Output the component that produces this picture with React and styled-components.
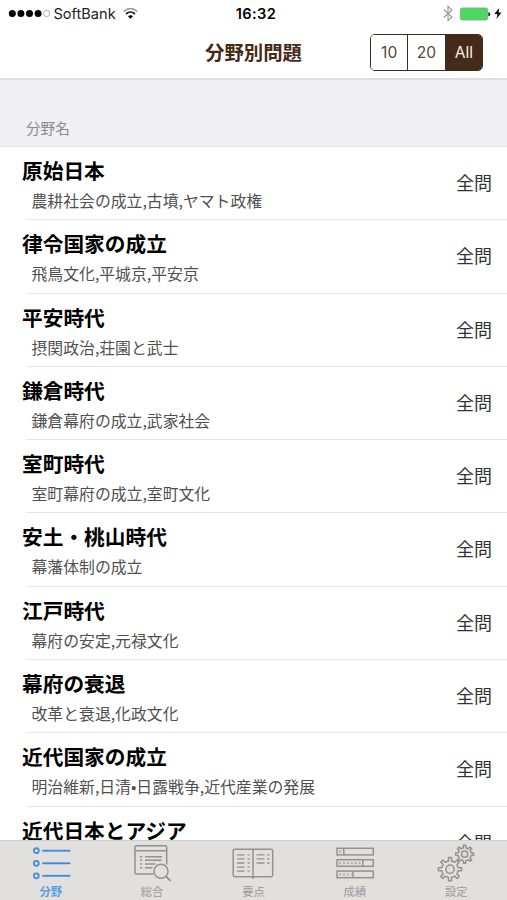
import React from "react";
import styled, { createGlobalStyle } from "styled-components";

const brown = "#452a17";

const GlobalStyle = createGlobalStyle`
  * { box-sizing: border-box; }
  body { margin: 0; background: #fff; overflow: hidden; }
`;

const Screen = styled.div`
  width: 507px;
  height: 900px;
  display: flex;
  flex-direction: column;
  overflow: hidden;
  background: #fff;
  color: #000;
  font-family: Inter, "Noto Sans CJK JP", sans-serif;
`;

const StatusBar = styled.div`
  flex: none;
  height: 27px;
  display: grid;
  grid-template-columns: 1fr auto 1fr;
  align-items: center;
  padding: 0 5px 0 8px;
`;

const Carrier = styled.div`
  display: flex;
  align-items: center;
  font-size: 14.6px;
  color: #222;
`;

const CarrierName = styled.span`
  margin: 0 7px 0 2.5px;
`;

const Clock = styled.div`
  padding-left: 2px;
  font-size: 14.6px;
  font-weight: 600;
  letter-spacing: 0.35px;
`;

const Indicators = styled.div`
  display: flex;
  align-items: center;
  justify-content: flex-end;
`;

const NavBar = styled.header`
  flex: none;
  height: 53px;
  display: grid;
  grid-template-columns: 1fr auto 1fr;
  align-items: center;
  padding: 0 24px 1px;
  border-bottom: 2px solid #dedee1;
`;

const NavTitle = styled.h1`
  grid-column: 2;
  margin: 0;
  font: 700 19.4px/28px "Noto Sans CJK JP", sans-serif;
  color: ${brown};
`;

const Segments = styled.div`
  justify-self: end;
  display: flex;
  width: 113px;
  height: 37px;
  border: 1px solid ${brown};
  border-radius: 5px;
  overflow: hidden;
`;

const Segment = styled.button`
  flex: 1;
  padding: 0;
  border: 0;
  border-left: ${(p) => (p.$first ? "0" : `1px solid ${brown}`)};
  background: ${(p) => (p.$active ? brown : "#fff")};
  color: ${(p) => (p.$active ? "#f3efec" : "#5a4334")};
  font: 400 15.6px Inter, sans-serif;
`;

const SectionHeader = styled.div`
  flex: none;
  height: 67px;
  display: flex;
  align-items: flex-end;
  padding: 0 26px 7px;
  background: #efeff4;
  border-bottom: 1px solid #e6e6ea;
  font: 400 14.6px/22px "Noto Sans CJK JP", sans-serif;
  color: #8b8b90;
`;

const List = styled.main`
  flex: 1;
  min-height: 0;
  overflow: hidden;
`;

const Row = styled.div`
  height: 73.3px;
  display: flex;
  align-items: flex-start;
  justify-content: space-between;
  padding: 8px 15px 0 22px;
  background: linear-gradient(#e6e6e8, #e6e6e8) 26px 100% / 100% 1px no-repeat;
  font-family: "Noto Sans CJK JP", sans-serif;
`;

const RowTitle = styled.div`
  font-size: 20.7px;
  font-weight: 700;
  line-height: 30px;
`;

const RowDetail = styled.div`
  padding: 1px 0 0 9.5px;
  font-size: 15.85px;
  line-height: 30px;
  color: #505050;
`;

const RowCount = styled.div`
  padding-top: 13px;
  font-size: 18px;
  line-height: 28px;
  color: #333;
`;

const TabBar = styled.nav`
  flex: none;
  height: 60px;
  display: grid;
  grid-template-columns: repeat(5, 1fr);
  background: #e1e0dc;
  border-top: 1px solid #cfcfcc;
`;

const Tab = styled.div`
  display: flex;
  flex-direction: column;
  align-items: center;
  color: ${(p) => (p.$active ? "#3c8ae2" : "#929292")};
`;

const TabLabel = styled.span`
  font: ${(p) => (p.$active ? 700 : 400)} 11.3px/16px "Noto Sans CJK JP", sans-serif;
  color: ${(p) => (p.$active ? "#5a9de6" : "#9b9b9b")};
`;

const Icon = styled.svg`
  display: block;
  flex: none;
  fill: none;
  stroke: currentColor;
  stroke-width: 1.5;
`;

const SignalDots = () => (
  <Icon width="43" height="10" viewBox="0 0 43 10">
    {[4.3, 12.9, 21.5, 30.1].map((x) => (
      <circle key={x} cx={x} cy="4.5" r="3.5" fill="#000" stroke="none" />
    ))}
    <circle cx="38.6" cy="4.5" r="3.1" stroke="#999" strokeWidth="0.8" />
  </Icon>
);

const WifiIcon = () => (
  <Icon width="16" height="12" viewBox="0 0 16 12">
    <path d="M.8 3.6C5-.4 10-.4 14.2 3.6" stroke="#999" />
    <path d="M3 6C5.6 3.6 9.4 3.6 12 6" stroke="#222" strokeWidth="1.8" />
    <path d="M5 8.2Q7.5 6.2 10 8.2L7.5 10.8Z" fill="#000" stroke="none" />
  </Icon>
);

const BluetoothIcon = () => (
  <Icon width="10" height="17" viewBox="0 0 10 17">
    <path d="M.8 4.5L9 12 5 15.7V1.3L9 5 .8 12.5" stroke="#999" strokeWidth="1.1" />
  </Icon>
);

const BatteryIcon = () => (
  <Icon width="41" height="14" viewBox="0 0 41 14">
    <rect x="7.3" y="1" width="27.4" height="12" rx="2" fill="#4bd963" stroke="#84a98a" strokeWidth="0.9" />
    <path d="M35.3 5.2q2 0 2 2t-2 2z" fill="#222" stroke="none" />
  </Icon>
);

const BoltIcon = () => (
  <Icon width="8" height="11" viewBox="0 0 8 11">
    <path d="M5.3 0L.3 6H3.5L2.4 11 7.5 4.6H4.5Z" fill="#000" stroke="none" />
  </Icon>
);

const ListIcon = () => (
  <Icon width="40" height="42" viewBox="0 0 40 42">
    {[9.7, 22.3, 34.8].map((y) => (
      <g key={y}>
        <circle cx="5.3" cy={y} r="2.5" strokeWidth="1.7" />
        <path d={`M11.3 ${y}H39.3`} strokeWidth="1.9" />
      </g>
    ))}
  </Icon>
);

const SearchPageIcon = () => (
  <Icon width="40" height="42" viewBox="0 0 40 42">
    <path d="M21.5 33H4.5Q3 33 3 31.5V6Q3 4.8 4.5 4.8H33.2Q34.7 4.8 34.7 6V23.4M3 9.8H34.7" />
    {[15.7, 19.3, 23, 26.7].map((y, i) => (
      <path key={y} d={`M8 ${y}H10.3M13 ${y}H${[30, 29.5, 23.5, 20.5][i]}`} strokeWidth="1.4" />
    ))}
    <circle cx="29" cy="30.3" r="7" />
    <path d="M34 35.3L38.5 39.8" strokeWidth="1.9" />
  </Icon>
);

const BookIcon = () => (
  <Icon width="42" height="42" viewBox="0 0 42 42">
    <path d="M21 8.2H3Q1.2 8.2 1.2 10V34Q1.2 35.7 3 35.7H19.5L21 37 22.5 35.7H39Q40.7 35.7 40.7 34V10Q40.7 8.2 39 8.2ZM21 8.2V37" />
    {[13.8, 17.9, 22, 26.1, 30.2].map((y) => (
      <path key={y} d={`M5 ${y}H12.5M15.5 ${y}H17.7`} strokeWidth="1.3" />
    ))}
    {[13.8, 17.9, 22].map((y) => (
      <path key={y} d={`M24.5 ${y}H32.5M35 ${y}H37.5`} strokeWidth="1.3" />
    ))}
  </Icon>
);

const BarsIcon = () => (
  <Icon width="40" height="42" viewBox="0 0 40 42">
    {[[7.3, 6.8], [18.7, 25.8], [30.1, 16]].map(([y, fill]) => (
      <g key={y}>
        <rect x="2" y={y} width="36.3" height="6.6" />
        <path d={`M${2 + fill} ${y}V${y + 6.6}`} />
        <path
          d={`M4 ${y + 3.3}H${fill + 0.5}`}
          strokeWidth="2.4"
          strokeDasharray="2.1 1.8"
          strokeOpacity="0.55"
        />
      </g>
    ))}
  </Icon>
);

function gearPath(cx, cy, outer, inner, teeth) {
  const step = (Math.PI * 2) / teeth;
  const points = [];
  for (let i = 0; i < teeth; i += 1) {
    const a = i * step - Math.PI / 2;
    [[-0.24, inner], [-0.16, outer], [0.16, outer], [0.24, inner]].forEach(([offset, r]) => {
      const t = a + offset * step;
      points.push(`${(cx + r * Math.cos(t)).toFixed(2)} ${(cy + r * Math.sin(t)).toFixed(2)}`);
    });
  }
  return `M${points.join("L")}Z`;
}

const GearsIcon = () => (
  <Icon width="40" height="42" viewBox="0 0 40 42" strokeLinejoin="round">
    <path d={gearPath(14, 28.2, 11.7, 8.4, 8)} />
    <circle cx="14" cy="28.2" r="4.1" />
    <path d={gearPath(28.6, 13.2, 9, 6.6, 8)} />
    <circle cx="28.6" cy="13.2" r="3.1" />
  </Icon>
);

const topics = [
  ["原始日本", "農耕社会の成立,古墳,ヤマト政権"],
  ["律令国家の成立", "飛鳥文化,平城京,平安京"],
  ["平安時代", "摂関政治,荘園と武士"],
  ["鎌倉時代", "鎌倉幕府の成立,武家社会"],
  ["室町時代", "室町幕府の成立,室町文化"],
  ["安土・桃山時代", "幕藩体制の成立"],
  ["江戸時代", "幕府の安定,元禄文化"],
  ["幕府の衰退", "改革と衰退,化政文化"],
  ["近代国家の成立", "明治維新,日清•日露戦争,近代産業の発展"],
  ["近代日本とアジア", ""],
];

const tabs = [
  ["分野", ListIcon],
  ["総合", SearchPageIcon],
  ["要点", BookIcon],
  ["成績", BarsIcon],
  ["設定", GearsIcon],
];

export default function App() {
  return (
    <Screen>
      <GlobalStyle />
      <StatusBar>
        <Carrier>
          <SignalDots />
          <CarrierName>SoftBank</CarrierName>
          <WifiIcon />
        </Carrier>
        <Clock>16:32</Clock>
        <Indicators>
          <BluetoothIcon />
          <BatteryIcon />
          <BoltIcon />
        </Indicators>
      </StatusBar>
      <NavBar>
        <NavTitle>分野別問題</NavTitle>
        <Segments>
          <Segment $first>10</Segment>
          <Segment>20</Segment>
          <Segment $active>All</Segment>
        </Segments>
      </NavBar>
      <SectionHeader>分野名</SectionHeader>
      <List>
        {topics.map(([title, detail]) => (
          <Row key={title}>
            <div>
              <RowTitle>{title}</RowTitle>
              {detail && <RowDetail>{detail}</RowDetail>}
            </div>
            <RowCount>全問</RowCount>
          </Row>
        ))}
      </List>
      <TabBar>
        {tabs.map(([label, TabIcon], i) => (
          <Tab key={label} $active={i === 0}>
            <TabIcon />
            <TabLabel $active={i === 0}>{label}</TabLabel>
          </Tab>
        ))}
      </TabBar>
    </Screen>
  );
}
